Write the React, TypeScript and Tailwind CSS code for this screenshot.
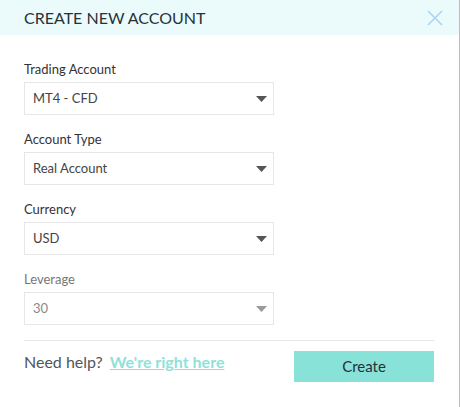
const fields = [
  { label: 'Trading Account', value: 'MT4 - CFD', disabled: false },
  { label: 'Account Type', value: 'Real Account', disabled: false },
  { label: 'Currency', value: 'USD', disabled: false },
  { label: 'Leverage', value: '30', disabled: true },
]

function Caret({ muted }: { muted: boolean }) {
  return (
    <svg width="11" height="6" viewBox="0 0 11 6" className={muted ? 'text-[#9a9a9a]' : 'text-[#555]'}>
      <path d="M0 0h11L5.5 6z" fill="currentColor" />
    </svg>
  )
}

export default function App() {
  return (
    <div
      className="h-[407px] w-[460px] border-r border-[#bdbdbd] bg-white"
      style={{ fontFamily: 'Lato, "Open Sans", sans-serif' }}
    >
      {/* Header */}
      <div className="flex h-[35px] items-center justify-between bg-[#ebfbfb] pl-6 pr-[16px]">
        <h1 className="text-[16px] text-[#27313b]">CREATE NEW ACCOUNT</h1>
        <svg width="16" height="16" viewBox="0 0 16 16" className="text-[#a9d4f7]">
          <path d="M1 1l14 14M15 1L1 15" stroke="currentColor" strokeWidth="1.6" />
        </svg>
      </div>

      {/* Form */}
      <div className="px-6 pt-[25px]">
        <div className="flex flex-col gap-[15px]">
          {fields.map((f) => (
            <div key={f.label} className="w-[250px]">
              <div className={`mb-[4px] text-[13px] leading-[18px] ${f.disabled ? 'text-[#777]' : 'text-[#333]'}`}>
                {f.label}
              </div>
              <div className="flex h-[33px] items-center justify-between border border-[#e6e6e6] pl-[8px] pr-[6px]">
                <span className={`text-[13px] ${f.disabled ? 'text-[#8a8a8a]' : 'text-[#444]'}`}>{f.value}</span>
                <Caret muted={f.disabled} />
              </div>
            </div>
          ))}
        </div>

        <div className="mt-[15px] w-[410px] border-t border-[#e6e6e6]" />

        <div className="flex w-[410px] items-start justify-between pt-[10px]">
          <div className="flex items-center gap-[7px] text-[16px] leading-[22px]">
            <span className="text-[#50565c]">Need help?</span>
            <a href="#" className="font-bold text-[#8fe2d9] underline">We're right here</a>
          </div>
          <button className="h-[31px] w-[140px] bg-[#88e2d8] text-[15px] text-[#24303a]">Create</button>
        </div>
      </div>
    </div>
  )
}
